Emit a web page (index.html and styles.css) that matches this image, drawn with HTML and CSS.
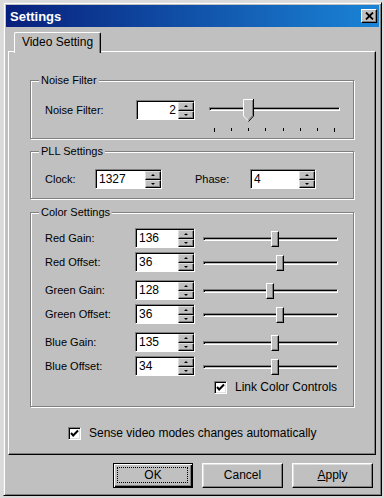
FILE: index.html
```html
<!DOCTYPE html>
<html lang="en">
<head>
    <meta charset="UTF-8">
    <title>Settings</title>
    <link rel="stylesheet" href="styles.css">
</head>
<body>
<div class="window">
    <div class="titlebar">
        <span class="title">Settings</span>
        <div class="close">
            <svg width="9" height="8" viewBox="0 0 9 8"><path d="M1 0.5L8 7.5M8 0.5L1 7.5" stroke="#000" stroke-width="1.8"/></svg>
        </div>
    </div>

    <div class="tabs">
        <div class="tab">Video Setting</div>
    </div>

    <div class="panel">
        <!-- Noise filter -->
        <div class="group noise">
            <span class="group-title">Noise Filter</span>
            <div class="row">
                <span class="label noise-label">Noise Filter:</span>
                <div class="spin spin-noise">
                    <span class="value right">2</span>
                    <div class="arrows"><span class="arrow up"></span><span class="arrow down"></span></div>
                </div>
                <div class="slider slider-noise">
                    <div class="track"></div>
                    <svg class="pointer" style="left:34px" width="11" height="23" viewBox="0 0 11 23">
                        <path d="M0 0H11V17L5.5 22.5L0 17Z" fill="#c0c0c0"/>
                        <polyline points="0.5,17 0.5,0.5 10,0.5" fill="none" stroke="#fff"/>
                        <polyline points="0.5,17 5,21.5" fill="none" stroke="#fff"/>
                        <polyline points="10.5,0 10.5,17 5.5,22.5" fill="none" stroke="#000"/>
                        <polyline points="9.5,1 9.5,16.5 5.5,21" fill="none" stroke="#808080"/>
                    </svg>
                    <div class="ticks">
                        <i class="long"></i><i></i><i></i><i></i><i></i><i></i><i></i><i class="long"></i>
                    </div>
                </div>
            </div>
        </div>

        <!-- PLL -->
        <div class="group pll">
            <span class="group-title">PLL Settings</span>
            <div class="row">
                <span class="label clock-label">Clock:</span>
                <div class="spin spin-clock">
                    <span class="value">1327</span>
                    <div class="arrows"><span class="arrow up"></span><span class="arrow down"></span></div>
                </div>
                <span class="label phase-label">Phase:</span>
                <div class="spin spin-phase">
                    <span class="value">4</span>
                    <div class="arrows"><span class="arrow up"></span><span class="arrow down"></span></div>
                </div>
            </div>
        </div>

        <!-- Color -->
        <div class="group color">
            <span class="group-title">Color Settings</span>

            <div class="row color-row">
                <span class="label color-label">Red Gain:</span>
                <div class="spin spin-color"><span class="value">136</span><div class="arrows"><span class="arrow up"></span><span class="arrow down"></span></div></div>
                <div class="slider"><div class="track"></div><div class="thumb" style="left:68px"></div></div>
            </div>
            <div class="row color-row">
                <span class="label color-label">Red Offset:</span>
                <div class="spin spin-color"><span class="value">36</span><div class="arrows"><span class="arrow up"></span><span class="arrow down"></span></div></div>
                <div class="slider"><div class="track"></div><div class="thumb" style="left:73px"></div></div>
            </div>

            <div class="row color-row pair">
                <span class="label color-label">Green Gain:</span>
                <div class="spin spin-color"><span class="value">128</span><div class="arrows"><span class="arrow up"></span><span class="arrow down"></span></div></div>
                <div class="slider"><div class="track"></div><div class="thumb" style="left:63px"></div></div>
            </div>
            <div class="row color-row">
                <span class="label color-label">Green Offset:</span>
                <div class="spin spin-color"><span class="value">36</span><div class="arrows"><span class="arrow up"></span><span class="arrow down"></span></div></div>
                <div class="slider"><div class="track"></div><div class="thumb" style="left:73px"></div></div>
            </div>

            <div class="row color-row pair">
                <span class="label color-label">Blue Gain:</span>
                <div class="spin spin-color"><span class="value">135</span><div class="arrows"><span class="arrow up"></span><span class="arrow down"></span></div></div>
                <div class="slider"><div class="track"></div><div class="thumb" style="left:68px"></div></div>
            </div>
            <div class="row color-row">
                <span class="label color-label">Blue Offset:</span>
                <div class="spin spin-color"><span class="value">34</span><div class="arrows"><span class="arrow up"></span><span class="arrow down"></span></div></div>
                <div class="slider"><div class="track"></div><div class="thumb" style="left:68px"></div></div>
            </div>

            <label class="checkline link">
                <span class="check"><svg width="11" height="11" viewBox="0 0 11 11"><polyline points="2,5 4.2,7.5 9,2.5" fill="none" stroke="#000" stroke-width="2"/></svg></span>
                <span>Link Color Controls</span>
            </label>
        </div>

        <label class="checkline sense">
            <span class="check"><svg width="11" height="11" viewBox="0 0 11 11"><polyline points="2,5 4.2,7.5 9,2.5" fill="none" stroke="#000" stroke-width="2"/></svg></span>
            <span>Sense video modes changes automatically</span>
        </label>
    </div>

    <div class="buttons">
        <div class="btn default">OK</div>
        <div class="btn">Cancel</div>
        <div class="btn"><u>A</u>pply</div>
    </div>
</div>
</body>
</html>
```

FILE: styles.css
```css
body {
    margin: 2px 0 0 3px;
    background: #dadada;
    font-family: "Liberation Sans", Arial, sans-serif;
    font-size: 11px;
    color: #000;
}
.window {
    width: 379px;
    box-sizing: border-box;
    background: #c0c0c0;
    border: 1px solid;
    border-color: #dfdfdf #000 #000 #dfdfdf;
    box-shadow: inset 1px 1px #fff, inset -1px -1px #808080;
    padding: 2px 2px 7px;
}
.titlebar {
    height: 22px;
    display: flex;
    align-items: center;
    justify-content: space-between;
    padding: 0 2px 0 4px;
    background: linear-gradient(90deg, #08207c, #1a84d6);
    color: #fff;
}
.title {
    font-weight: bold;
    font-size: 13px;
}
.close {
    width: 16px;
    height: 14px;
    box-sizing: border-box;
    display: flex;
    align-items: center;
    justify-content: center;
    background: #c0c0c0;
    border: 1px solid;
    border-color: #fff #000 #000 #fff;
    box-shadow: inset -1px -1px #808080;
}
.tabs {
    display: flex;
    margin-top: 5px;
    padding-left: 8px;
}
.tab {
    position: relative;
    z-index: 1;
    width: 87px;
    height: 21px;
    box-sizing: border-box;
    background: #c0c0c0;
    border: 1px solid;
    border-color: #fff #000 transparent #fff;
    border-bottom: none;
    border-radius: 2px 2px 0 0;
    box-shadow: inset -1px 0 #808080;
    text-align: center;
    line-height: 18px;
    font-size: 12px;
}
.panel {
    margin: -2px 3px 0 2px;
    height: 404px;
    box-sizing: border-box;
    border: 1px solid;
    border-color: #fff #000 #000 #fff;
    box-shadow: inset -1px -1px #808080;
    padding: 28px 21px 0;
}
.group {
    position: relative;
    box-sizing: border-box;
    border: 1px solid #808080;
    box-shadow: inset 1px 1px #fff, 1px 1px #fff;
    padding-left: 14px;
}
.group-title {
    position: absolute;
    top: -7px;
    left: 8px;
    padding: 0 2px;
    background: #c0c0c0;
    line-height: 13px;
}
.row {
    display: flex;
    align-items: flex-start;
}
.label {
    line-height: 20px;
}

/* spin boxes */
.spin {
    display: flex;
    height: 20px;
    box-sizing: border-box;
    background: #fff;
    border: 1px solid;
    border-color: #808080 #fff #fff #808080;
    box-shadow: inset 1px 1px #000;
    padding: 1px 0 0 1px;
}
.value {
    flex: 1;
    padding: 0 2px;
    line-height: 17px;
    font-size: 12px;
}
.value.right {
    text-align: right;
}
.arrows {
    width: 16px;
    display: flex;
    flex-direction: column;
}
.arrow {
    flex: 1;
    display: flex;
    align-items: center;
    justify-content: center;
    background: #c0c0c0;
    border: 1px solid;
    border-color: #dfdfdf #000 #000 #dfdfdf;
    box-shadow: inset -1px -1px #808080;
}
.arrow::before {
    content: "";
    width: 0;
    height: 0;
    border-left: 2px solid transparent;
    border-right: 2px solid transparent;
}
.up::before {
    border-bottom: 2px solid #000;
}
.down::before {
    border-top: 2px solid #000;
}

/* trackbars */
.slider {
    position: relative;
    width: 135px;
    height: 20px;
}
.track {
    height: 4px;
    margin-top: 9px;
    box-sizing: border-box;
    border: 1px solid;
    border-color: #808080 #fff #fff #808080;
    box-shadow: inset 1px 1px #000;
}
.thumb {
    position: absolute;
    top: 3px;
    width: 8px;
    height: 16px;
    box-sizing: border-box;
    background: #c0c0c0;
    border: 1px solid;
    border-color: #fff #000 #000 #fff;
    box-shadow: inset -1px -1px #808080;
}
.pointer {
    position: absolute;
    top: -1px;
}
.ticks {
    display: flex;
    justify-content: space-between;
    align-items: flex-start;
    margin-top: 17px;
    padding: 0 5px;
}
.ticks i {
    width: 1px;
    height: 3px;
    background: #000;
}
.ticks i.long {
    height: 4px;
}

/* noise */
.noise {
    height: 59px;
    padding-top: 19px;
}
.noise-label {
    width: 91px;
}
.spin-noise {
    width: 59px;
}
.slider-noise {
    width: 131px;
    margin-left: 14px;
}
.slider-noise .track {
    margin-top: 7px;
}

/* pll */
.pll {
    margin-top: 12px;
    height: 48px;
    padding-top: 17px;
}
.clock-label {
    width: 50px;
}
.spin-clock {
    width: 67px;
}
.phase-label {
    width: 55px;
    margin-left: 33px;
}
.spin-phase {
    width: 66px;
}

/* color */
.color {
    margin-top: 13px;
    height: 195px;
    padding-top: 11px;
}
.color-row {
    margin-top: 4px;
}
.color-row.pair {
    margin-top: 8px;
}
.color-label {
    width: 90px;
}
.spin-color {
    width: 60px;
}
.color .slider {
    margin-left: 8px;
}

/* checkboxes */
.checkline {
    display: flex;
    align-items: center;
    gap: 8px;
    line-height: 13px;
}
.check {
    width: 13px;
    height: 13px;
    box-sizing: border-box;
    display: flex;
    align-items: center;
    justify-content: center;
    background: #fff;
    border: 1px solid;
    border-color: #808080 #fff #fff #808080;
    box-shadow: inset 1px 1px #000, inset -1px -1px #dfdfdf;
}
.link {
    margin: 5px 0 0 169px;
    font-size: 12px;
}
.sense {
    margin: 20px 0 0 38px;
    font-size: 12px;
}

/* buttons */
.buttons {
    display: flex;
    justify-content: flex-end;
    gap: 9px;
    margin-top: 8px;
    padding-right: 6px;
}
.btn {
    position: relative;
    width: 81px;
    height: 25px;
    box-sizing: border-box;
    border: 1px solid;
    border-color: #fff #000 #000 #fff;
    box-shadow: inset -1px -1px #808080, inset 1px 1px #dfdfdf;
    text-align: center;
    line-height: 23px;
    font-size: 12px;
}
.btn.default {
    width: 80px;
    border-color: #000;
    box-shadow: inset 1px 1px #fff, inset -1px -1px #000, inset -2px -2px #808080;
}
.btn.default::after {
    content: "";
    position: absolute;
    inset: 3px 4px 4px 3px;
    border: 1px dotted #000;
}
```
